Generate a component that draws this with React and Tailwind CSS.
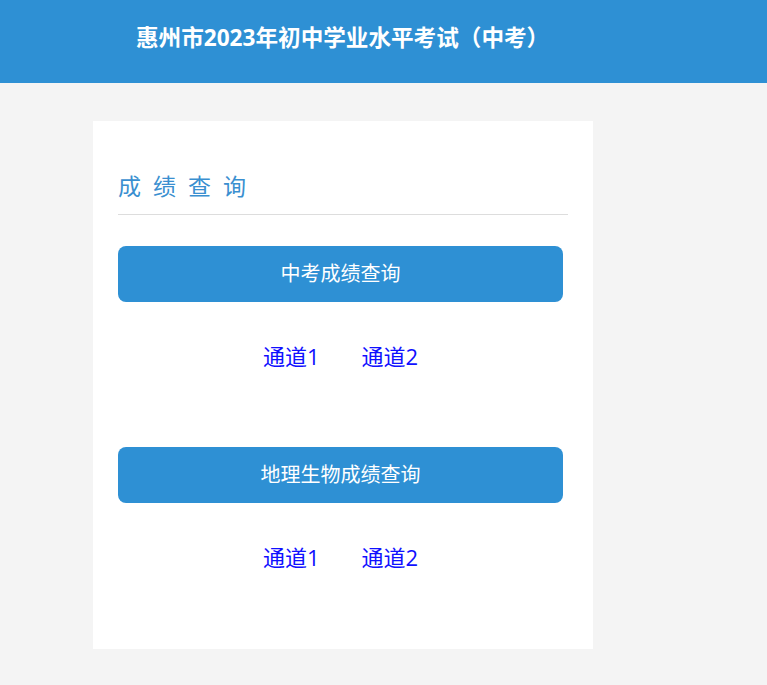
import React from "react";

const font = { fontFamily: '"Open Sans", "Noto Sans CJK SC", sans-serif' };

function Section({ label, first }) {
  return (
    <div className={first ? "mt-[31px]" : "mt-[76px]"}>
      <button className="flex h-[56px] w-[445px] items-center justify-center rounded-[8px] bg-[#2e90d4] text-[20px] text-white">
        {label}
      </button>
      <div className="mt-[39px] flex h-[30px] w-[445px] items-center justify-center gap-[42px] text-[22px] leading-[30px] text-[#1010ff]">
        <a href="#">通道1</a>
        <a href="#">通道2</a>
      </div>
    </div>
  );
}

export default function App() {
  return (
    <div className="min-h-[685px] bg-[#f4f4f4]" style={font}>
      <header className="flex h-[83px] items-center bg-[#2e90d4] pb-[7px] pl-[136px]">
        <h1 className="text-[22.6px] font-bold text-white">
          惠州市2023年初中学业水平考试（中考）
        </h1>
      </header>
      <main className="pl-[93px] pt-[38px]">
        <div className="w-[500px] bg-white px-[25px] pb-[77px] pt-[50px]">
          <div className="border-b border-[#dddddd] pb-[13px]">
            <h2 className="h-[30px] text-[23px] leading-[30px] tracking-[12px] text-[#3a8fd0]">
              成绩查询
            </h2>
          </div>
          <Section label="中考成绩查询" first />
          <Section label="地理生物成绩查询" />
        </div>
      </main>
    </div>
  );
}
